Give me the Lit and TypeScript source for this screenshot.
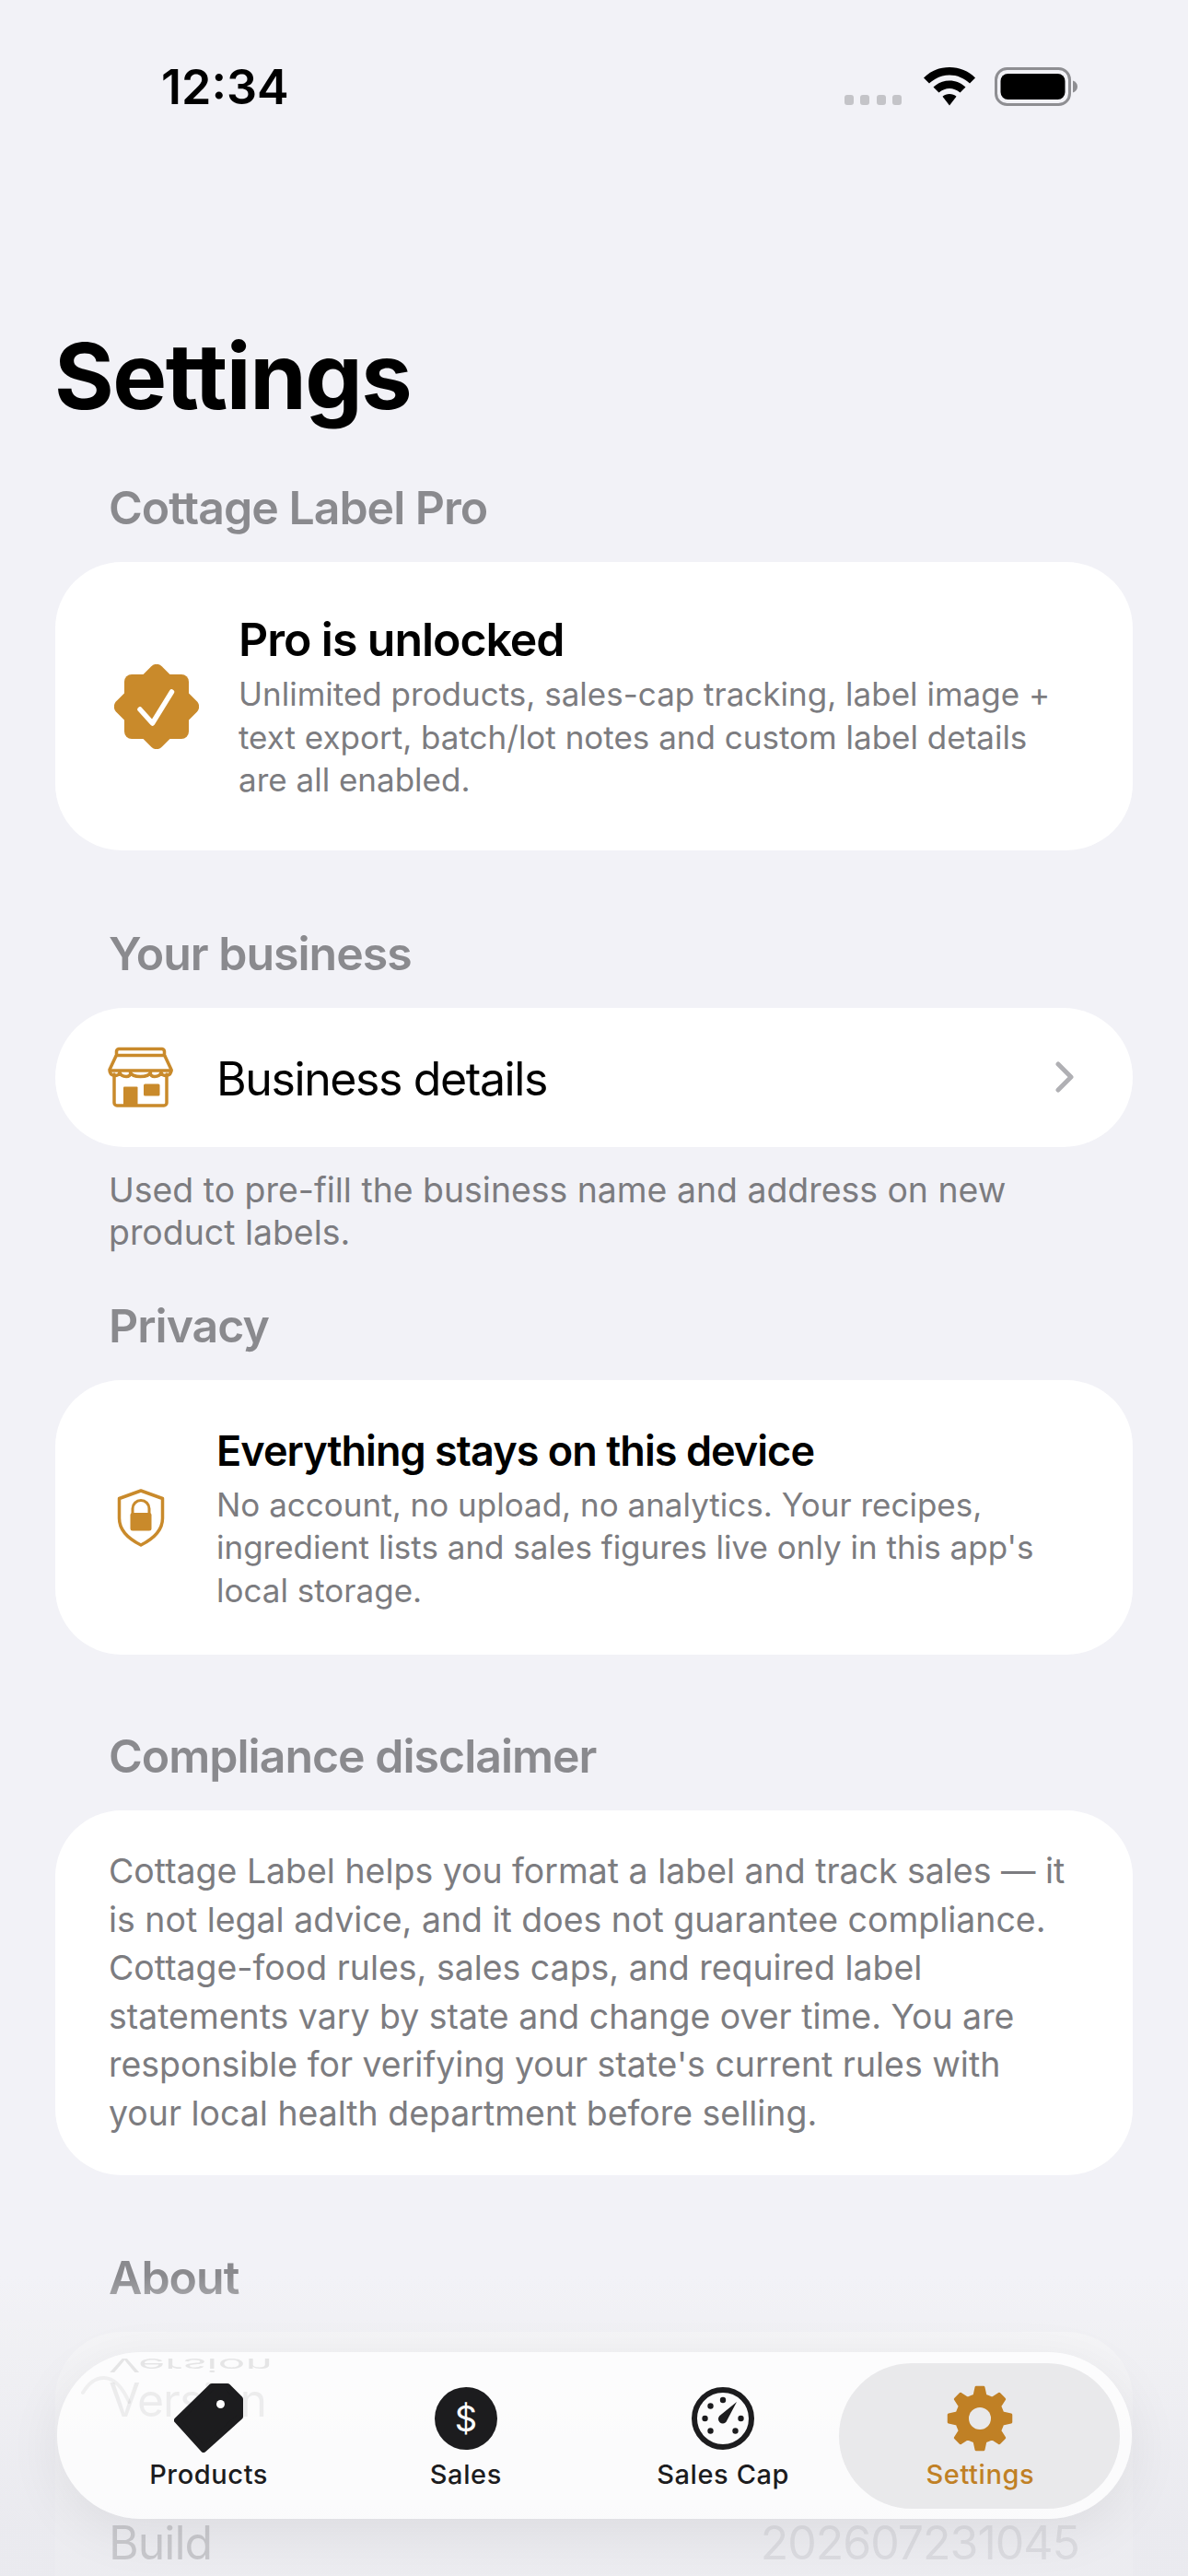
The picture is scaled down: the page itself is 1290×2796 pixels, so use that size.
import { LitElement, html, css, svg } from "lit";
import { customElement } from "lit/decorators.js";

function gearPath(cx: number, cy: number, ro: number, ri: number, n: number) {
  const pts: string[] = [];
  const step = (Math.PI * 2) / n;
  for (let i = 0; i < n; i++) {
    const a = -Math.PI / 2 + i * step;
    const list: [number, number][] = [
      [ri, a - step * 0.3],
      [ro, a - step * 0.15],
      [ro, a + step * 0.15],
      [ri, a + step * 0.3],
    ];
    for (const [r, t] of list) pts.push(`${(cx + r * Math.cos(t)).toFixed(2)} ${(cy + r * Math.sin(t)).toFixed(2)}`);
  }
  return `M${pts.join("L")}Z`;
}

const tagIcon = html`<svg class="ico" viewBox="0 0 75 75" width="75" height="75">
  <path fill="#1c1c1e" stroke="#1c1c1e" stroke-width="7" stroke-linejoin="round"
    d="M41 3.5L58 3.5L71.5 17V36L32 71.5L3.500 40Z"/>
  <circle cx="50.500" cy="22.500" r="4.500" fill="#fff"/>
</svg>`;

const gaugeDots: [number, number][] = [[0, -20], [-13.5, -13.500], [-19.500, 0], [19.500, 0], [-13.5, 13.500], [13.5, 13.500]];
const gaugeIcon = html`<svg class="ico" viewBox="-37 -37 74 74" width="74" height="74">
  <circle r="31" fill="none" stroke="#1c1c1e" stroke-width="6"/>
  ${gaugeDots.map(([x, y]) => svg`<circle cx=${x} cy=${y} r="3.200" fill="#1c1c1e"/>`)}
  <path fill="#1c1c1e" d="M15 -18L3.500 3.800A4.800 4.800 0 0 1 -3.800 -2.800Z"/>
</svg>`;

const gearIcon = html`<svg class="ico" viewBox="0 0 74 74" width="74" height="74">
  <path fill="#c08025" stroke="#c08025" stroke-width="3" stroke-linejoin="round" d=${gearPath(37, 37, 34, 25.5, 8)}/>
  <circle cx="37" cy="37" r="12" fill="#e9e9eb"/>
</svg>`;

@customElement("app-root")
export class AppRoot extends LitElement {
  static styles = css`
    :host {
      display: block;
      width: 1290px;
      height: 2796px;
      overflow: hidden;
      position: relative;
      background: #f2f2f7;
      font-family: Inter, "Noto Sans", sans-serif;
      color: #000;
    }
    .status {
      height: 180px;
      display: flex;
      justify-content: space-between;
      padding: 62px 120px 0 175px;
      box-sizing: border-box;
    }
    .time {
      font-size: 52px;
      font-weight: 600;
      line-height: 66px;
    }
    .sys {
      display: flex;
      align-items: flex-start;
      padding-top: 11px;
    }
    .dots {
      display: flex;
      gap: 7.500px;
      margin: 30px 0 0 0;
    }
    .dots i {
      width: 10px;
      height: 11px;
      border-radius: 3px;
      background: #c4c4c8;
    }
    .wifi { margin-left: 24px; }
    .batt { margin-left: 21px; }
    .content {
      padding: 0 60px;
    }
    h1 {
      margin: 0 0 0 -1px;
      font-size: 99px;
      font-weight: 700;
      line-height: 120px;
      height: 341px;
      padding-top: 168px;
      box-sizing: border-box;
      letter-spacing: -1.5px;
    }
    h2 {
      margin: 0 0 29px 58px;
      font-size: 50px;
      font-weight: 600;
      line-height: 60px;
      color: #8a8a8e;
      letter-spacing: -1px;
    }
    .card {
      background: #fff;
      border-radius: 72px;
    }
    .row {
      display: flex;
      align-items: center;
    }
    .pro {
      padding: 54px 80px 53px 64px;
      margin-bottom: 82px;
      gap: 43px;
    }
    .biz {
      height: 151px;
      box-sizing: border-box;
      padding: 0 63px 0 57px;
      gap: 47px;
      border-radius: 76px;
    }
    .biz .name {
      flex: 1;
      font-size: 50px;
      font-weight: 400;
      letter-spacing: -1.4px;
      padding-top: 3px;
    }
    .priv {
      padding: 49px 50px 47px 57px;
      margin-bottom: 80px;
      gap: 47px;
    }
    .ttl {
      font-size: 50px;
      font-weight: 600;
      line-height: 60px;
      letter-spacing: -1.05px;
    }
    .ttl.small {
      font-size: 45px;
      line-height: 56px;
      margin-bottom: 7px;
      letter-spacing: -0.95px;
    }
    .desc {
      font-size: 35px;
      line-height: 46.500px;
      color: #7c7c80;
    }
    .pro .ttl { margin-bottom: 6px; }
    .icobox {
      flex: none;
      display: flex;
      justify-content: center;
      align-items: center;
    }
    .icobox.w71 { width: 71px; }
    .note {
      margin: 24px 100px 47px 58px;
      font-size: 37.400px;
      line-height: 46.500px;
      color: #7c7c80;
    }
    .legal {
      padding: 40px 66px 41px 58px;
      margin-bottom: 81px;
      font-size: 37.450px;
      line-height: 52.500px;
      color: #7c7c80;
    }
    .about {
      padding: 44px 58px 0;
      height: 400px;
      box-sizing: border-box;
      font-size: 50px;
      line-height: 60px;
      letter-spacing: -1px;
    }
    .about .line {
      display: flex;
      justify-content: space-between;
      height: 155px;
    }
    .about .val { color: #8a8a8e; }
    .fade {
      position: absolute;
      left: 0;
      right: 0;
      top: 2470px;
      bottom: 0;
      background: linear-gradient(
        to bottom,
        rgba(240, 240, 243, 0) 0,
        rgba(240, 240, 243, 0.7) 63px,
        rgba(233, 233, 238, 0.86) 270px,
        rgba(233, 233, 238, 0.86) 100%
      );
    }
    .bar {
      position: absolute;
      left: 62px;
      top: 2553px;
      width: 1167px;
      height: 181px;
      box-sizing: border-box;
      padding: 0 25px;
      display: flex;
      border-radius: 91px;
      background: rgba(255, 255, 255, 0.75);
      box-shadow: 0 14px 60px rgba(0, 0, 0, 0.07);
    }
    .mirror {
      position: absolute;
      left: 56px;
      top: -1px;
      font-size: 50px;
      line-height: 30px;
      letter-spacing: 0;
      color: rgba(0, 0, 0, 0.09);
      transform: scaleY(-0.4);
      filter: blur(0.6px);
    }
    .mirror::before { content: "Version"; }
    .arc {
      position: absolute;
      left: 26px;
      top: 18px;
    }
    .tab {
      flex: 1;
      position: relative;
      display: flex;
      flex-direction: column;
      align-items: center;
      padding-top: 34px;
      box-sizing: border-box;
    }
    .tab.on::before {
      content: "";
      position: absolute;
      left: -14px;
      right: -12px;
      top: 12px;
      bottom: 11px;
      border-radius: 79px;
      background: #e9e9eb;
    }
    .ico, .coin {
      position: relative;
      display: block;
      flex: none;
    }
    .iconwrap {
      height: 75px;
      display: flex;
      align-items: center;
      justify-content: center;
      margin-bottom: 6px;
      position: relative;
    }
    .coin {
      width: 68px;
      height: 68px;
      border-radius: 50%;
      background: #1c1c1e;
      color: #fff;
      font-size: 38px;
      font-weight: 400;
      line-height: 68px;
      text-align: center;
    }
    .lbl {
      position: relative;
      font-size: 29px;
      font-weight: 500;
      line-height: 36px;
      letter-spacing: 0.6px;
      color: #1c1c1e;
    }
    .on .lbl { color: #c08025; }
  `;

  render() {
    const tabs = [
      { l: "Products", i: tagIcon },
      { l: "Sales", i: html`<div class="coin">$</div>` },
      { l: "Sales Cap", i: gaugeIcon },
      { l: "Settings", i: gearIcon, on: true },
    ];
    return html`
      <div class="status">
        <div class="time">12:34</div>
        <div class="sys">
          <div class="dots"><i></i><i></i><i></i><i></i></div>
          <svg class="wifi" width="56" height="42" viewBox="0 0 56 42">
            <path fill="#000" d="M28 0C17 0 7.500 4 0 11.500L6 17.500C12 12 19.500 8.600 28 8.600S44 12 50 17.500L56 11.500C48.500 4 39 0 28 0Z"/>
            <path fill="#000" d="M28 14.500C21.500 14.500 15.500 17 10.500 21.500L16.500 27.500C20 24.500 24 23 28 23S36 24.500 39.500 27.500L45.500 21.500C40.500 17 34.500 14.500 28 14.500Z"/>
            <path fill="#000" d="M28 29C25 29 22.500 30 20.500 31.800L28 41.500L35.500 31.800C33.500 30 31 29 28 29Z"/>
          </svg>
          <svg class="batt" width="90" height="42" viewBox="0 0 90 42">
            <rect x="1.500" y="1.500" width="80" height="39" rx="12" fill="none" stroke="#8e8e92" stroke-width="3"/>
            <rect x="6.500" y="7" width="70" height="28" rx="8" fill="#000"/>
            <path fill="#8e8e92" d="M85 14.500C88 15.500 90 18 90 21S88 26.500 85 27.500Z"/>
          </svg>
        </div>
      </div>
      <div class="content">
        <h1>Settings</h1>

        <h2>Cottage Label Pro</h2>
        <div class="card row pro">
          <div class="icobox">
            <svg width="92" height="92" viewBox="-46 -46 92 92">
              <rect x="-35" y="-35" width="70" height="70" rx="8" fill="#c98a2b"/>
              <rect x="-35" y="-35" width="70" height="70" rx="8" fill="#c98a2b" transform="rotate(45)"/>
              <path d="M-18 3L-4.500 18L16.500 -16" fill="none" stroke="#fff" stroke-width="5.500" stroke-linecap="round" stroke-linejoin="round"/>
            </svg>
          </div>
          <div>
            <div class="ttl">Pro is unlocked</div>
            <div class="desc">Unlimited products, sales-cap tracking, label image + text export, batch/lot notes and custom label details are all enabled.</div>
          </div>
        </div>

        <h2>Your business</h2>
        <div class="card row biz">
          <div class="icobox">
            <svg width="71" height="66" viewBox="0 0 71 66" fill="none" stroke="#c98a2b" stroke-width="3.500" stroke-linejoin="round" stroke-linecap="round">
              <path d="M12 2.500H59A3 3 0 0 1 61.500 5V9L69 25C69 33 59 33 58 28C56 34 45 34 46.500 28C44 34 27 34 24.500 28C26 34 15 34 13 28C12 33 2 33 2 25L9.500 9V5A3 3 0 0 1 12 2.500Z"/>
              <path d="M9.500 9.500H61.500M2.500 26H69"/>
              <path d="M7 30V61A3 3 0 0 0 10 64H61A3 3 0 0 0 64 61V30"/>
              <rect x="17" y="43.500" width="15.500" height="20.500" rx="1" fill="#c98a2b" stroke="none"/>
              <rect x="39" y="40.500" width="17.500" height="13" rx="1.500" fill="#c98a2b" stroke="none"/>
            </svg>
          </div>
          <div class="name">Business details</div>
          <svg width="22" height="34" viewBox="0 0 22 34" fill="none" stroke="#b0b0b4" stroke-width="5" stroke-linecap="round" stroke-linejoin="round">
            <path d="M4 3L18 17L4 31"/>
          </svg>
        </div>
        <div class="note">Used to pre-fill the business name and address on new product labels.</div>

        <h2>Privacy</h2>
        <div class="card row priv">
          <div class="icobox w71">
            <svg width="52" height="63" viewBox="0 0 52 63">
              <path d="M26 2L49.500 10.500V32C49.500 46 38 55 26 61C14 55 2.500 46 2.500 32V10.500Z" fill="none" stroke="#c98a2b" stroke-width="3.500" stroke-linejoin="round"/>
              <path d="M17 27V21.500A9 9 0 0 1 35 21.500V27" fill="none" stroke="#c98a2b" stroke-width="3"/>
              <rect x="14.500" y="26" width="23" height="19.500" rx="2.500" fill="#c98a2b"/>
            </svg>
          </div>
          <div>
            <div class="ttl small">Everything stays on this device</div>
            <div class="desc">No account, no upload, no analytics. Your recipes, ingredient lists and sales figures live only in this app's local storage.</div>
          </div>
        </div>

        <h2>Compliance disclaimer</h2>
        <div class="card legal">Cottage Label helps you format a label and track sales — it is not legal advice, and it does not guarantee compliance. Cottage-food rules, sales caps, and required label statements vary by state and change over time. You are responsible for verifying your state's current rules with your local health department before selling.</div>

        <h2>About</h2>
        <div class="card about">
          <div class="line"><span>Version</span></div>
          <div class="line"><span>Build</span><span class="val">202607231045</span></div>
        </div>
      </div>
      <div class="fade"></div>
      <div class="bar">
        <svg class="arc" width="70" height="40" viewBox="0 0 70 40" fill="none" stroke="rgba(0,0,0,0.05)" stroke-width="4" stroke-linecap="round">
          <path d="M2 26C14 6 36 0 52 36"/>
        </svg>
        <div class="mirror"></div>
        ${tabs.map(
          (t) => html`<div class="tab ${t.on ? "on" : ""}">
            <div class="iconwrap">${t.i}</div>
            <div class="lbl">${t.l}</div>
          </div>`
        )}
      </div>
    `;
  }
}
